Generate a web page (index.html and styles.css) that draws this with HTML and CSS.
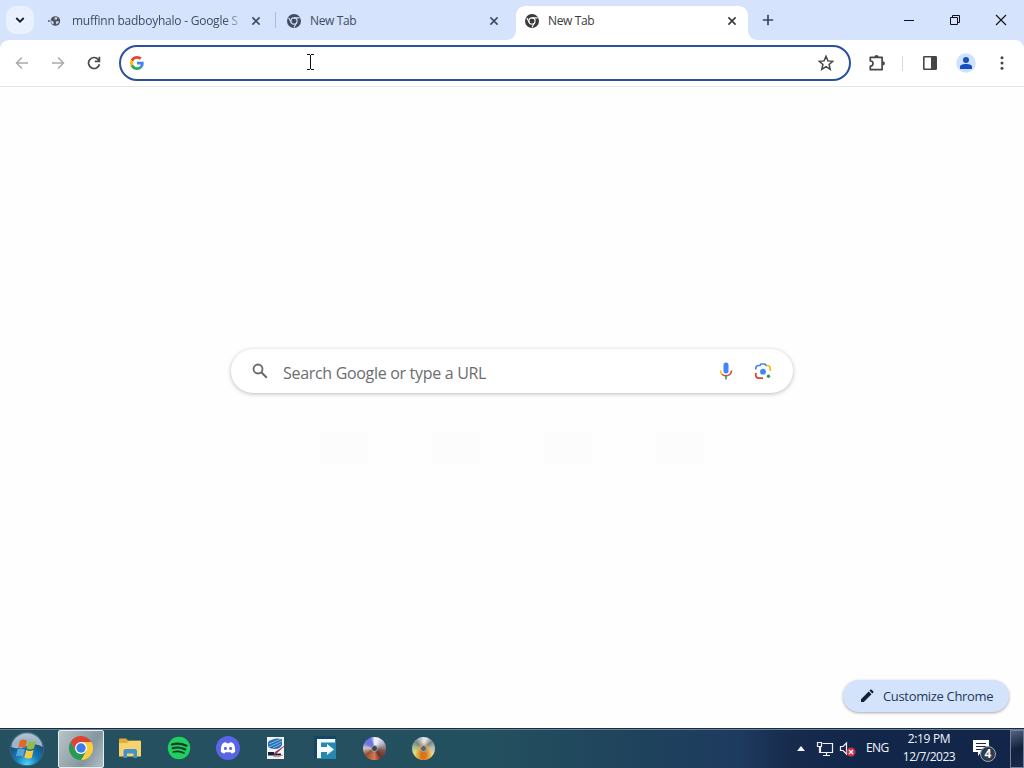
FILE: index.html
```html
<!DOCTYPE html>
<html lang="en">
<head>
<meta charset="utf-8">
<title>New Tab</title>
<link rel="stylesheet" href="styles.css">
</head>
<body>
<svg class="defs" width="0" height="0">
  <symbol id="chrome-mono" viewBox="0 0 14 14">
    <circle cx="7" cy="7" r="7" fill="currentColor"/>
    <circle cx="7" cy="7" r="3.1" fill="none" stroke="var(--gap)" stroke-width="1.1"/>
    <path d="M7 3.9H12.600M4.300 8.500L1.600 3.800M9.700 8.500L7 13.200" fill="none" stroke="var(--gap)" stroke-width="1.1"/>
  </symbol>
  <symbol id="close" viewBox="0 0 10 10"><path d="M1.4 1.4L8.6 8.6M8.6 1.4L1.4 8.6" fill="none" stroke="currentColor" stroke-width="1.6"/></symbol>
</svg>
<div class="window">
  <header class="tabstrip">
    <button class="tab-search"><svg width="10" height="10" viewBox="0 0 10 10"><path d="M1.3 3L5 6.7L8.7 3" fill="none" stroke="#1b1d22" stroke-width="1.8"/></svg></button>
    <div class="tab first">
      <svg class="fav" width="14" height="14" viewBox="0 0 14 14"><circle cx=".8" cy="7" r=".9" fill="#3c5878"/><circle cx="7.400" cy="7" r="4.800" fill="#4b535f"/><path d="M3.400 6.200L5.800 8.100L5.300 10.600C3.600 9.800 2.800 8 3.400 6.200ZM6.800 3.200L9.800 3.600L8.400 5.800L6.500 5.600ZM7.800 7.600L10.800 7L10.400 9L8.300 10.500Z" fill="#cbd9ee"/></svg>
      <span class="title fade">muffinn badboyhalo - Google S</span>
      <svg class="x" width="10" height="10"><use href="#close"/></svg>
    </div>
    <div class="tab">
      <svg class="fav" width="14" height="14"><use href="#chrome-mono"/></svg>
      <span class="title">New Tab</span>
      <svg class="x" width="10" height="10"><use href="#close"/></svg>
    </div>
    <div class="tab active">
      <svg class="fav" width="14" height="14"><use href="#chrome-mono"/></svg>
      <span class="title">New Tab</span>
      <svg class="x" width="10" height="10"><use href="#close"/></svg>
    </div>
    <svg class="plus" width="12" height="12" viewBox="0 0 12 12"><path d="M6 .8V11.2M.8 6H11.2" stroke="#3b4860" stroke-width="1.7"/></svg>
    <div class="controls">
      <svg width="12" height="12" viewBox="0 0 12 12"><path d="M1 6.5H11" stroke="#111"/></svg>
      <svg width="12" height="12" viewBox="0 0 12 12"><path d="M1.500 3.500H8.500V10.500H1.500ZM3.500 3.500V1.500H10.500V8.500H8.500" fill="none" stroke="#111"/></svg>
      <svg width="12" height="12" viewBox="0 0 12 12"><path d="M1 1L11 11M11 1L1 11" stroke="#111" stroke-width="1.1"/></svg>
    </div>
  </header>
  <div class="toolbar-wrap">
  <nav class="toolbar">
    <div class="nav-icons">
      <svg width="14" height="14" viewBox="0 0 14 14"><path d="M13 7H2M7 1.5L1.5 7L7 12.5" fill="none" stroke="#aaa" stroke-width="1.5"/></svg>
      <svg width="14" height="14" viewBox="0 0 14 14"><path d="M1 7H12M7 1.5L12.5 7L7 12.5" fill="none" stroke="#aaa" stroke-width="1.5"/></svg>
      <svg width="14" height="14" viewBox="0 0 14 14"><path d="M12.4 8.2A5.5 5.5 0 1 1 11.2 3.4L12.4 4.8" fill="none" stroke="#46484b" stroke-width="1.7"/><path d="M12.4 .8V5.4H7.8" fill="none" stroke="#46484b" stroke-width="1.7"/></svg>
    </div>
    <div class="omnibox">
      <svg width="14" height="14" viewBox="0 0 48 48"><path fill="#ea4335" d="M24 9.5c3.5 0 6.7 1.2 9.2 3.6l6.9-6.9C35.9 2.4 30.5 0 24 0 14.6 0 6.5 5.4 2.6 13.2l8 6.2C12.4 13.7 17.7 9.5 24 9.5z"/><path fill="#4285f4" d="M47 24.6c0-1.600-.2-3.100-.4-4.600H24v9h12.900c-.6 3-2.300 5.500-4.800 7.200l7.700 6C44.400 38 47 31.800 47 24.600z"/><path fill="#fbbc05" d="M10.500 28.600a14.500 14.500 0 0 1 0-9.200l-8-6.200a24 24 0 0 0 0 21.600z"/><path fill="#34a853" d="M24 48c6.500 0 11.900-2.100 15.900-5.800l-7.700-6c-2.200 1.400-4.900 2.300-8.200 2.300-6.300 0-11.600-4.200-13.500-9.900l-8 6.200C6.500 42.600 14.600 48 24 48z"/></svg>
      <svg class="caret" width="7" height="16" viewBox="0 0 7 16"><path d="M0 .5H3M4 .5H7M3.500 1V15M0 15.500H3M4 15.500H7" fill="none" stroke="#111"/></svg>
      <svg class="star" width="16" height="16" viewBox="0 0 16 16"><path d="M8 1.300L9.900 5.900L14.800 6.300L11.100 9.500L12.200 14.300L8 11.700L3.800 14.300L4.900 9.500L1.200 6.300L6.100 5.900Z" fill="none" stroke="#464646" stroke-width="1.500"/></svg>
    </div>
    <svg class="puzzle" width="18" height="18" viewBox="0 0 18 18"><path d="M2.300 3.300H14.100V15.700H2.300V12C4 12.200 5 11 5 9.500S4 6.800 2.300 7Z" fill="none" stroke="#464646" stroke-width="1.700" stroke-linejoin="round"/><path d="M6.400 3A2.100 2.100 0 0 1 10.600 3ZM14.800 7.300A2.100 2.100 0 0 1 14.800 11.500Z" fill="#464646"/></svg>
    <i class="divider"></i>
    <svg class="panel" width="16" height="16" viewBox="0 0 16 16"><rect x="1.800" y="1.800" width="12.400" height="12.400" rx=".5" fill="none" stroke="#464646" stroke-width="1.600"/><path d="M9 2H14.500V14H9Z" fill="#464646"/></svg>
    <svg class="avatar" width="20" height="20" viewBox="0 0 20 20"><circle cx="10" cy="10" r="9.700" fill="#cfe1fc"/><circle cx="10" cy="7" r="3" fill="#1550c0"/><path d="M4 16V14C4 11.800 7 11 10 11S16 11.800 16 14V16Z" fill="#1550c0"/></svg>
    <svg class="dots" width="4" height="14" viewBox="0 0 4 14"><g fill="#464646"><circle cx="2" cy="1.700" r="1.500"/><circle cx="2" cy="7" r="1.500"/><circle cx="2" cy="12.300" r="1.500"/></g></svg>
  </nav>
  </div>
  <main class="page">
    <div class="search">
      <svg class="glass" width="16" height="16" viewBox="0 0 16 16"><circle cx="6" cy="6" r="4.500" fill="none" stroke="#68696b" stroke-width="1.800"/><path d="M9.300 9.300L14.800 14.800" stroke="#68696b" stroke-width="2"/></svg>
      <span class="placeholder">Search Google or type a URL</span>
      <svg class="mic" width="14" height="18" viewBox="0 0 14 18"><rect x="4.500" y=".6" width="5" height="11" rx="2.500" fill="#4285f4"/><path d="M1.500 8.500C1.500 10.300 2.200 11.700 3.400 12.700" fill="none" stroke="#fbbc05" stroke-width="1.600"/><path d="M3 12.300C5 14.400 9 14.400 11 12.300C12 11.300 12.500 10 12.500 8.500" fill="none" stroke="#dc4940" stroke-width="1.600"/><path d="M7 14V17.400" stroke="#34a853" stroke-width="1.700"/></svg>
      <svg class="lens" width="18" height="18" viewBox="0 0 18 18"><g fill="none" stroke-width="1.700"><path d="M1.800 7.500V6.500Q1.800 3.500 4.500 3.500H6L7 2H11L12 3.500H13" stroke="#4285f4"/><path d="M12.500 3.500H13.500Q16.200 3.500 16.200 6.500V9" stroke="#fbbc05"/><path d="M1.800 11V13Q1.800 16.200 5 16.200H9" stroke="#dc4038"/></g><circle cx="9" cy="9.700" r="2.900" fill="#4285f4"/><circle cx="14.500" cy="14.300" r="1.700" fill="#34955b"/></svg>
    </div>
    <div class="tiles"><i></i><i></i><i></i><i></i></div>
    <button class="customize"><svg width="14" height="14" viewBox="0 0 14 14"><path d="M1 10.200L8.700 2.500L11.500 5.300L3.800 13H1ZM9.500 1.700L10.600.6Q11 .2 11.400.6L13.400 2.600Q13.800 3 13.400 3.400L12.300 4.500Z" fill="#10213f"/></svg><span>Customize Chrome</span></button>
  </main>
  <footer class="taskbar">
    <div class="start"><svg width="36" height="36" viewBox="0 0 36 36"><defs><radialGradient id="orb" cx=".5" cy=".95" r=".95"><stop offset="0" stop-color="#4fd5ff"/><stop offset=".35" stop-color="#167cb9"/><stop offset=".75" stop-color="#1c4b76"/><stop offset="1" stop-color="#7796a8"/></radialGradient></defs><circle cx="18" cy="18" r="16.800" fill="url(#orb)" stroke="#38647c"/><path d="M2.200 16A16 16 0 0 1 33.800 16Q26 11 18 15T2.200 16Z" fill="#d4e0e4" opacity=".7"/><path d="M11 9.500Q14.500 7.500 18 9.700L16.200 17Q12.600 15 9 17Z" fill="#e3672d"/><path d="M19.300 10.300Q22.800 12 26.800 10.100L25 17.600Q21.400 19.300 17.600 17.500Z" fill="#94bd45"/><path d="M8.600 18.300Q12.200 16.500 15.800 18.500L14 25.800Q10.300 23.800 6.900 25.500Z" fill="#55a5dc"/><path d="M17.200 19Q20.700 20.800 24.600 19L22.700 26.700Q19 28.500 15.300 26.500Z" fill="#f8cd3c"/></svg></div>
    <div class="running"><svg width="24" height="24" viewBox="0 0 24 24"><path d="M12 12L12 6H22.400A12 12 0 0 1 12 24L17.200 15Z" fill="#fbce3d"/><path d="M12 12L17.200 15L12 24A12 12 0 0 1 1.600 6L6.800 15Z" fill="#279b51"/><path d="M1.600 6L6.800 15L12 6H22.400A12 12 0 0 0 1.600 6Z" fill="#db4437"/><circle cx="12" cy="12" r="6" fill="#fff"/><circle cx="12" cy="12" r="4.700" fill="#3b7ded"/></svg></div>
    <div class="apps">
      <svg width="24" height="24" viewBox="0 0 24 24"><path d="M1 3.500Q1 2.500 2 2.500H8L10 4.500H22Q23 4.500 23 5.500V20H1Z" fill="#e3ad35"/><path d="M1 7H9L11 5H23V20.500H1Z" fill="#f5d36f"/><path d="M5.500 22V15Q5.500 13 7.500 13H17Q19 13 19 15V22H15.500V17.500H9V22Z" fill="#4492ca"/></svg>
      <svg width="24" height="24" viewBox="0 0 24 24"><circle cx="12" cy="12" r="11.200" fill="#20cf60"/><g fill="none" stroke="#143b2a" stroke-linecap="round"><path d="M5 8.500Q12 6.200 19.500 9.800" stroke-width="2.300"/><path d="M5.700 12.300Q12 10.400 18.300 13.500" stroke-width="2"/><path d="M6.300 16Q12 14.300 17 17" stroke-width="1.600"/></g></svg>
      <svg width="24" height="24" viewBox="0 0 24 24"><circle cx="12" cy="12" r="12" fill="#5865e8"/><path d="M8.200 6.600L10 6.200L10.700 7.200H13.300L14 6.200L15.800 6.600Q18.500 7.500 19 12Q19.500 15 18.800 16Q17.300 17.500 15.500 17.600L14.600 16.300H9.400L8.500 17.600Q6.700 17.500 5.200 16Q4.500 15 5 12Q5.500 7.500 8.200 6.600Z" fill="#fff"/><ellipse cx="9.400" cy="12.400" rx="1.500" ry="1.700" fill="#5865e8"/><ellipse cx="14.600" cy="12.400" rx="1.500" ry="1.700" fill="#5865e8"/></svg>
      <svg width="24" height="24" viewBox="0 0 24 24"><path d="M2 1H19V23H2Z" fill="#f1f3f5"/><path d="M3 6Q9 1 17 3V9Q15 13 10 13Q4 13 3 10Z" fill="#256fb4"/><path d="M4 8L16 3M4 11L17 5M8 12L16 8" stroke="#9cc8e8" stroke-width=".8"/><path d="M3 16H9V17.500H16V19.500H3Z" fill="#15213c"/><path d="M22.500 7.500L12 17L8 20L10 16Z" fill="#9f344d"/><path d="M8 20Q12 22.500 18 19" fill="none" stroke="#df7480"/></svg>
      <svg width="24" height="24" viewBox="0 0 24 24"><path d="M1 2H22V23H3Z" fill="#258ab1"/><path d="M0 0H22V3H3V22H0Z" fill="#114867"/><path d="M3 22V3H21V6.500H7V11H13V8L20 13.500L13 19V16H7V22Z" fill="#f8fbfc"/></svg>
      <div class="disc purple"></div>
      <div class="disc burn"></div>
    </div>
    <div class="tray">
      <svg class="up" width="8" height="5" viewBox="0 0 8 5"><path d="M0 5L4 0L8 5Z" fill="#f4f7fc"/></svg>
      <svg class="network" width="18" height="16" viewBox="0 0 18 16"><path d="M6.500 2.500H16.500V11.500H4.500V6M10.500 12V14.500M7 14.500H14M1.500 1.500H5.500V5.500H1.500ZM3.500 6V11.500H5" fill="none" stroke="#edf2fa" stroke-width="1.200"/></svg>
      <svg class="volume" width="18" height="16" viewBox="0 0 18 16"><path d="M1.500 5.500H4L7.500 2V13L4 9.500H1.500Z" fill="none" stroke="#edf2fa" stroke-width="1.200"/><circle cx="12" cy="11" r="4.500" fill="#d22f45"/><path d="M10 9L14 13M14 9L10 13" stroke="#fff" stroke-width="1.200"/></svg>
      <span class="lang">ENG</span>
      <div class="clock"><span class="time">2:19 PM</span><span class="date">12/7/2023</span></div>
      <div class="action"><svg width="17" height="17" viewBox="0 0 17 17"><path d="M0 0H16V12H8L5 16V12H0Z" fill="#fff"/><path d="M3 3.500H13M3 6.500H13M3 9.500H10" stroke="#1b2848"/></svg><b>4</b></div>
      <div class="desktop"></div>
    </div>
  </footer>
</div>
</body>
</html>
```
FILE: styles.css
```css
* { box-sizing: border-box; }
body { margin: 0; overflow: hidden; font-family: "Open Sans", "Noto Sans", sans-serif; }
svg { display: block; flex: none; }
button { border: 0; padding: 0; font: inherit; }
.defs { position: absolute; }
.window { width: 1024px; height: 768px; display: flex; flex-direction: column; background: #fff; }
.tabstrip { height: 40px; flex: none; display: flex; align-items: center; background: #d5e3fd; padding-left: 6px; }
.tab-search { width: 28px; height: 28px; border-radius: 10px; background: #e9f1fe; display: grid; place-items: center; margin-right: 6px; }
.tab { --gap: #d5e3fd; position: relative; width: 232px; height: 34px; margin: 6px 6px 0 0; padding: 0 11px 5px 9px; display: flex; align-items: center; color: #414c60; }
.tab.active { --gap: #fff; background: #fff; border-radius: 9px 9px 0 0; margin-right: 14px; color: #3a3a3c; }
.tab.active::before, .tab.active::after { content: ""; position: absolute; bottom: 0; width: 9px; height: 9px; }
.tab.active::before { left: -9px; background: radial-gradient(circle at 0 0, transparent 8.5px, #fff 9px); }
.tab.active::after { right: -9px; background: radial-gradient(circle at 100% 0, transparent 8.5px, #fff 9px); }
.tab.first { padding-left: 8px; }
.tab.first .fav { margin-right: 10px; }
.tab.first::after { content: ""; position: absolute; left: 235px; top: 6px; width: 1px; height: 16px; background: #a9bbdc; }
.fav { margin-right: 9px; }
.title { width: 168px; font-size: 12px; line-height: 18px; letter-spacing: -.38px; white-space: nowrap; }
.fade { letter-spacing: -.24px; -webkit-mask-image: linear-gradient(90deg, #000 91%, transparent 103%); mask-image: linear-gradient(90deg, #000 91%, transparent 103%); }
.tab .x { margin-left: 11px; }
.controls { display: flex; gap: 34px; margin-left: auto; padding-right: 17px; }
.toolbar-wrap { background: #d5e3fd; height: 47px; flex: none; }
.toolbar { height: 47px; display: flex; align-items: center; background: #fff; border-bottom: 1px solid #e4e5e8; border-radius: 9px 9px 0 0; padding-left: 15px; }
.nav-icons { display: flex; gap: 22px; margin-right: 18px; }
.omnibox { width: 732px; height: 36px; border: 2px solid #2851a2; border-radius: 18px; display: flex; align-items: center; padding: 0 15px 0 9px; }
.caret { margin: 0 0 2px 163px; }
.star { margin-left: auto; }
.puzzle { margin-left: 17px; }
.divider { width: 1px; height: 15px; background: #d4d9e6; margin-left: 16px; }
.panel { margin-left: 19px; }
.avatar { margin-left: 18px; }
.dots { margin-left: 24px; }
.page { height: 641px; flex: none; display: flex; flex-direction: column; align-items: center; padding-top: 262px; background: #fefefe; }
.search { width: 562px; height: 44px; flex: none; border-radius: 22px; background: #fff; box-shadow: 0 1px 4px rgba(32,33,36,.3); display: flex; align-items: center; padding-left: 21px; }
.placeholder { margin-left: 15px; width: 430px; font-size: 16px; line-height: 24px; letter-spacing: -.31px; color: #6b6c70; white-space: nowrap; padding-top: 3px; }
.mic { margin-left: 6px; }
.lens { margin-left: 21px; }
.tiles { display: flex; gap: 64px; margin-top: 39px; }
.tiles i { width: 48px; height: 31px; background: #fcfcfc; }
.customize { width: 166px; height: 32px; margin: auto 15px 16px auto; border-radius: 16px; background: #d4e3fc; box-shadow: 0 1px 3px rgba(0,0,0,.35); color: #24385a; font-size: 13px; letter-spacing: -.33px; display: flex; align-items: center; gap: 9px; padding-left: 17px; white-space: nowrap; }
.taskbar { height: 40px; flex: none; display: flex; align-items: center; border-top: 1px solid #172c44; background: linear-gradient(90deg, #25505f 0, #23505f 48%, #1f425c 63%, #1d3b60 72%, #172b4d 77%, #12264a 84%, #12264a 100%); box-shadow: inset 0 1px #6c8290; }
.start { padding: 0 0 0 9px; }
.running { margin: 1px 0 0 13px; width: 46px; height: 38px; border: 1px solid #e4edf0; border-radius: 2px; background: linear-gradient(120deg, #b9c4c7, #84979e 65%, #b4c1c4); display: grid; place-items: center; padding-bottom: 2px; }
.apps { display: flex; align-items: center; gap: 25px; margin-left: 14px; padding-bottom: 1px; }
.disc { width: 23px; height: 23px; border-radius: 50%; position: relative; }
.disc::after { content: ""; position: absolute; inset: 8px; border-radius: 50%; background: #39474e; border: 1px solid #a5afb0; }
.purple { background: conic-gradient(#eef 0 5%, #bdbbd0 15%, #805a50 28%, #6c3023 40%, #d67955 50%, #984d36 65%, #ccc 76%, #7777d5 83%, #6b72ed 94%, #eef); }
.burn { margin-left: 1px; background: radial-gradient(ellipse at 50% 78%, #d9731c 15%, #e0a33c 32%, rgba(224,190,90,0) 52%), conic-gradient(#dfe4e6 0 4%, #7d8488 14%, #b9c0bd 24%, #e6d58a 34%, #e9b755 50%, #dfdc86 68%, #a8c490 76%, #7b8388 86%, #dfe4e6); }
.burn::after { background: #56676b; }
.tray { display: flex; align-items: center; margin-left: auto; height: 39px; color: #f1f5fc; font-size: 12px; line-height: 18px; white-space: nowrap; }
.network { margin-left: 11px; }
.volume { margin-left: 5px; }
.lang { width: 24px; margin-left: 9px; letter-spacing: -.6px; padding-bottom: 1px; }
.clock { width: 54px; margin-left: 12px; padding-bottom: 1px; display: flex; flex-direction: column; align-items: center; }
.time { letter-spacing: -.35px; }
.date { letter-spacing: -.5px; }
.action { position: relative; margin-left: 17px; width: 24px; }
.action b { position: absolute; left: 7px; top: 6px; width: 16px; height: 16px; border-radius: 50%; border: 1px solid #a0a7b3; background: #303a4a; font-size: 12px; line-height: 14px; text-align: center; }
.desktop { width: 14px; height: 38px; margin-left: 13px; border: 1px solid #70809b; background: linear-gradient(160deg, #52637c, #12213f 50%, #1b2a49); }
```
